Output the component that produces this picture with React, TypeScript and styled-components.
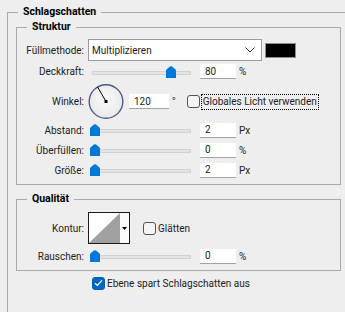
import React from "react";
import styled, { createGlobalStyle } from "styled-components";

const Global = createGlobalStyle`
  html, body { margin: 0; padding: 0; background: #eeeeee; }
  body {
    font-family: Roboto, "Noto Sans", sans-serif;
    font-size: 10px;
    color: #1c1c1c;
    width: 345px;
    height: 312px;
    overflow: hidden;
  }
`;

const Outer = styled.fieldset`
  box-sizing: border-box;
  margin: 5px 0 0 7px;
  padding: 0 4px 0 8px;
  min-width: 0;
  height: 307px;
  border: 1px solid #a9a9a9;
  border-right: none;
  border-bottom: none;
`;

const Group = styled.fieldset<{ $mt: number }>`
  margin: ${(p) => p.$mt}px 0 0 0;
  padding: 0 0 6px 0;
  min-width: 0;
  border: 1px solid #a9a9a9;
`;

const Legend = styled.legend<{ $ml: number }>`
  font-weight: 700;
  font-size: 10.5px;
  line-height: 14px;
  color: #000;
  padding: 0 5px;
  margin-left: ${(p) => p.$ml}px;
`;

const Row = styled.div<{ $mt: number; $h: number; $pl?: number }>`
  display: flex;
  align-items: center;
  height: ${(p) => p.$h}px;
  margin-top: ${(p) => p.$mt}px;
  padding-left: ${(p) => p.$pl ?? 0}px;
`;

const Label = styled.span`
  width: 67px;
  flex-shrink: 0;
  text-align: right;
  margin-right: 4px;
  white-space: nowrap;
`;

const Select = styled.div`
  box-sizing: border-box;
  width: 174px;
  height: 22px;
  background: #fff;
  border: 1px solid #9a9a9a;
  display: flex;
  align-items: center;
  justify-content: space-between;
  padding: 0 6px 0 3px;
`;

const Swatch = styled.div`
  box-sizing: border-box;
  width: 31px;
  height: 15px;
  margin-left: 3px;
  background: #000;
  border: 1px solid #8c8c8c;
`;

const Slider = styled.div`
  position: relative;
  width: 103px;
  height: 12px;
  flex-shrink: 0;
`;

const Track = styled.div`
  position: absolute;
  left: 4px;
  right: 0;
  top: 5px;
  height: 4px;
  box-sizing: border-box;
  background: #e4e4e4;
  border: 1px solid #d2d2d2;
`;

const Thumb = styled.svg`
  position: absolute;
  top: 0;
  width: 10px;
  height: 12px;
`;

const Field = styled.input<{ $w: number; $ml: number }>`
  box-sizing: border-box;
  width: ${(p) => p.$w}px;
  height: 15px;
  margin: 0 0 0 ${(p) => p.$ml}px;
  padding: 0 0 0 5px;
  border: none;
  border-bottom: 1px solid #a2a2a2;
  background: #fff;
  font: inherit;
  color: #1c1c1c;
  outline: none;
`;

const Unit = styled.span`
  margin-left: 3px;
`;

const Box = styled.span<{ $checked?: boolean; $ml: number }>`
  box-sizing: border-box;
  width: 13px;
  height: 13px;
  flex-shrink: 0;
  margin-left: ${(p) => p.$ml}px;
  margin-right: 2px;
  border-radius: 3px;
  border: 1px solid ${(p) => (p.$checked ? "#005fb8" : "#555")};
  background: ${(p) => (p.$checked ? "#0067c0" : "#f4f4f4")};
  display: flex;
  align-items: center;
  justify-content: center;
`;

const Focused = styled.span`
  outline: 1px dotted #000;
  outline-offset: 0;
  padding: 0 1px;
  line-height: 14px;
`;

const Contour = styled.div`
  box-sizing: border-box;
  width: 42px;
  height: 32px;
  border: 1px solid #1a1a1a;
  display: flex;
  background: #fafafa;
`;

const ContourArrow = styled.div`
  flex: 1;
  display: flex;
  align-items: center;
  justify-content: center;
`;

const SliderCtl = ({ value }: { value: number }) => (
  <Slider>
    <Track />
    <Thumb viewBox="0 0 10 12" style={{ left: 2 + value * 0.95 }}>
      <path d="M0 4.5 Q0 3.5 1 3 L4 0.6 Q5 0 6 0.6 L9 3 Q10 3.5 10 4.5 V12 H0 Z" fill="#0078d7" />
    </Thumb>
  </Slider>
);

const Dial = () => (
  <svg width="36" height="37" viewBox="0 0 36 37">
    <defs>
      <radialGradient id="dg" cx="50%" cy="45%" r="55%">
        <stop offset="0%" stopColor="#fbfbfb" />
        <stop offset="100%" stopColor="#e8e8ea" />
      </radialGradient>
    </defs>
    <circle cx="18" cy="18.5" r="16.8" fill="url(#dg)" stroke="#4d5b82" strokeWidth="1.4" />
    <line x1="18" y1="18.5" x2="9.6" y2="4" stroke="#000" strokeWidth="1" />
    <rect x="16.5" y="17" width="3" height="3" fill="#000" />
  </svg>
);

const Check = () => (
  <svg width="9" height="8" viewBox="0 0 9 8">
    <path d="M1 4.2 L3.4 6.5 L8 1.3" fill="none" stroke="#fff" strokeWidth="1.2" />
  </svg>
);

export default function App() {
  return (
    <>
      <Global />
      <Outer>
        <Legend $ml={2}>Schlagschatten</Legend>
        <Group $mt={1}>
          <Legend $ml={10}>Struktur</Legend>
          <Row $mt={5} $h={22}>
            <Label>Füllmethode:</Label>
            <Select>
              <span>Multiplizieren</span>
              <svg width="10" height="6" viewBox="0 0 10 6">
                <path d="M0.5 0.5 L5 5 L9.5 0.5" fill="none" stroke="#333" strokeWidth="1" />
              </svg>
            </Select>
            <Swatch />
          </Row>
          <Row $mt={2} $h={17}>
            <Label>Deckkraft:</Label>
            <SliderCtl value={80} />
            <Field $w={36} $ml={9} readOnly value="80" />
            <Unit>%</Unit>
          </Row>
          <Row $mt={3} $h={37}>
            <Label>Winkel:</Label>
            <Dial />
            <Field $w={40} $ml={5} readOnly value="120" />
            <Unit>°</Unit>
            <Box $ml={11} />
            <Focused>Globales Licht verwenden</Focused>
          </Row>
          <Row $mt={2} $h={16}>
            <Label>Abstand:</Label>
            <SliderCtl value={0} />
            <Field $w={36} $ml={9} readOnly value="2" />
            <Unit>Px</Unit>
          </Row>
          <Row $mt={4} $h={16}>
            <Label>Überfüllen:</Label>
            <SliderCtl value={0} />
            <Field $w={36} $ml={9} readOnly value="0" />
            <Unit>%</Unit>
          </Row>
          <Row $mt={4} $h={16}>
            <Label>Größe:</Label>
            <SliderCtl value={0} />
            <Field $w={36} $ml={9} readOnly value="2" />
            <Unit>Px</Unit>
          </Row>
        </Group>
        <Group $mt={7}>
          <Legend $ml={10}>Qualität</Legend>
          <Row $mt={6} $h={32}>
            <Label>Kontur:</Label>
            <Contour>
              <svg width="31" height="30" viewBox="0 0 31 30">
                <rect x="0" y="0" width="31" height="30" fill="#fff" />
                <path d="M0 30 L31 0 L31 30 Z" fill="#a0a0a0" />
                <line x1="31.5" y1="0" x2="31.5" y2="30" stroke="#1a1a1a" />
              </svg>
              <ContourArrow>
                <svg width="5" height="3" viewBox="0 0 5 3">
                  <path d="M0 0 H5 L2.5 3 Z" fill="#000" />
                </svg>
              </ContourArrow>
            </Contour>
            <Box $ml={13} />
            <span>Glätten</span>
          </Row>
          <Row $mt={4} $h={16}>
            <Label>Rauschen:</Label>
            <SliderCtl value={0} />
            <Field $w={36} $ml={9} readOnly value="0" />
            <Unit>%</Unit>
          </Row>
        </Group>
        <Row $mt={5} $h={14} $pl={76}>
          <Box $checked $ml={0}>
            <Check />
          </Box>
          <span>Ebene spart Schlagschatten aus</span>
        </Row>
      </Outer>
    </>
  );
}
